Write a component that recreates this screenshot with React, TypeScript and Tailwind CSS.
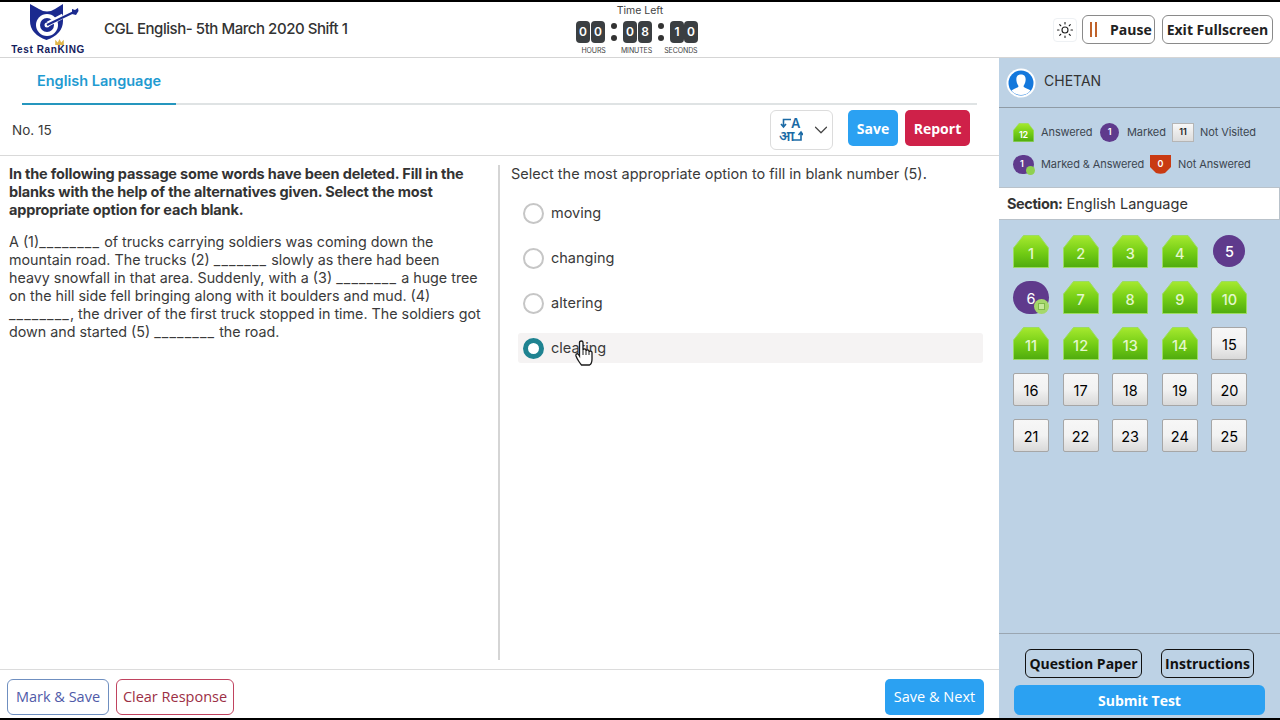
import React from "react";
import { Sun, ChevronDown } from "lucide-react";

const answered = [1, 2, 3, 4, 7, 8, 9, 10, 11, 12, 13, 14];

const Pentagon = ({ id, className }: { id: string; className?: string }) => (
  <svg viewBox="0 0 36 33" preserveAspectRatio="none" className={className}>
    <defs>
      <linearGradient id={id} x1="0" y1="0" x2="0" y2="1">
        <stop offset="0" stopColor="#a6e92f" />
        <stop offset="0.55" stopColor="#72cc14" />
        <stop offset="1" stopColor="#4fab0e" />
      </linearGradient>
    </defs>
    <path d="M10.500 .5 H26 L35.500 13 V32.500 H.5 V13 Z" fill={`url(#${id})`} stroke="#9bdc62" />
  </svg>
);

const Shield = () => (
  <svg viewBox="0 0 21 19" className="h-[19px] w-[21px]">
    <path d="M0 0 H21 V12 L15 18 Q10.5 19.500 6 18 L0 12 Z" fill="#c93a12" />
  </svg>
);

const Logo = () => (
  <div className="flex w-[72px] flex-col items-center">
    <svg viewBox="0 0 72 38" className="h-[38px] w-[72px]">
      <path d="M18 0 L27 5 Q35 10 43 5 L51 0 V17 Q51 30 34.500 36 Q18 30 18 17 Z" fill="#1b2a8f" />
      <circle cx="35" cy="21" r="11" fill="#fff" />
      <circle cx="35" cy="21" r="7" fill="#1b2a8f" />
      <circle cx="35" cy="21" r="2.500" fill="#fff" />
      <path d="M36 20 L51 12" stroke="#fff" strokeWidth="5" />
      <path d="M35 21 L62 8" stroke="#1b2a8f" strokeWidth="2.200" />
      <path d="M60 5 L63 6 L66 4 L66.500 7 L64 11 L60 10 Z" fill="#1b2a8f" />
    </svg>
    <div className="relative mt-[2px] text-[10px] font-bold leading-[12px] tracking-[0.6px] whitespace-nowrap text-[#14205c] font-['Liberation_Sans',sans-serif]">
      Test RanKING
      <svg viewBox="0 0 10 7" className="absolute left-[44px] top-[-5px] h-[6px] w-[9px]">
        <path d="M0 7 L0 1 L3 4 L5 0 L7 4 L10 1 V7 Z" fill="#e0b64a" />
      </svg>
    </div>
  </div>
);

const Digit = ({ v }: { v: string }) => (
  <span className="flex h-[22px] w-[14px] items-center justify-center rounded-[4px] bg-[#3b3f42] text-[12px] font-semibold text-white">
    {v}
  </span>
);

const Colon = () => (
  <span className="mx-[6px] flex w-[6px] flex-col gap-[6px]">
    <span className="h-[6px] w-[6px] rounded-full bg-[#333]" />
    <span className="h-[6px] w-[6px] rounded-full bg-[#333]" />
  </span>
);

const Timer = () => (
  <div className="flex w-[120px] flex-col items-center">
    <span className="ml-[6px] text-[10.500px] leading-[13px] text-[#444]">Time Left</span>
    <div className="mt-[4px] flex items-center">
      <Digit v="0" />
      <span className="w-[1px]" />
      <Digit v="0" />
      <Colon />
      <Digit v="0" />
      <span className="w-[1px]" />
      <Digit v="8" />
      <Colon />
      <Digit v="1" />
      <Digit v="0" />
    </div>
    <div className="mt-[4px] flex w-[121px] justify-between pl-[5px] text-[7px] leading-[8px] tracking-[-0.1px] text-[#444]">
      <span>HOURS</span>
      <span className="ml-[3px]">MINUTES</span>
      <span>SECONDS</span>
    </div>
  </div>
);

const TranslateIcon = () => (
  <div className="relative h-[24px] w-[24px] text-[#1b6aa5]">
    <svg viewBox="0 0 24 24" className="absolute inset-0 h-full w-full" fill="none" stroke="#1b6aa5" strokeWidth="1.600">
      <path d="M12 1.500 H4.500 V8.500 M2 6 L4.500 9 L7 6" />
      <path d="M13 22 H22 V14 M19.500 17 L22 14 L24 17" />
    </svg>
    <span className="absolute left-[12px] top-[-2px] text-[13px] font-semibold leading-[15px]">A</span>
    <span className="absolute left-[0px] top-[9px] text-[14px] font-semibold leading-[17px] font-['Noto_Sans','DejaVu_Sans',sans-serif]">आ</span>
  </div>
);

const Avatar = () => (
  <svg viewBox="0 0 30 30" className="h-[30px] w-[30px]">
    <circle cx="15" cy="15" r="14.500" fill="#fff" />
    <circle cx="15" cy="15" r="12.500" fill="#1478dc" />
    <path d="M15 6.500 C19.500 6.500 20 10 19.500 13 C19.200 15.500 18 17 17.500 18 C17.500 20 22 20.500 24.500 22.500 C20 28.500 10 28.500 5.500 22.500 C8 20.500 12.500 20 12.500 18 C12 17 10.800 15.500 10.500 13 C10 10 10.500 6.500 15 6.500 Z" fill="#fff" />
  </svg>
);

const HandCursor = () => (
  <svg viewBox="0 0 18 26" className="absolute left-[57px] top-[7px] h-[26px] w-[18px]">
    <path
      d="M4.500 2.500 C4.500 .5 8 .5 8 2.500 V10 C8 8.500 11 8.500 11 10 V11 C11 9.500 14 9.500 14 11 V12 C14 10.800 17 10.800 17 12.500 V19 C17 22 15.500 24.500 14.500 25 H6.500 C5.500 24 2 19 1 16 C.5 14 2.500 13 3.500 14.500 L4.500 16 Z"
      fill="#fff"
      stroke="#1a1a1a"
      strokeWidth="1.300"
    />
    <path d="M8 10 V15 M11 11 V15 M14 12 V15" stroke="#1a1a1a" strokeWidth="1" />
  </svg>
);

const Radio = ({ on }: { on?: boolean }) =>
  on ? (
    <span className="h-[21px] w-[21px] rounded-full border-[5px] border-[#1f8391] bg-white" />
  ) : (
    <span className="h-[21px] w-[21px] rounded-full border-2 border-[#c6c6c6] bg-white" />
  );

const Blank = ({ n }: { n: 7 | 8 }) => (
  <span className="tracking-[1.100px]">{n === 7 ? "_______" : "________"}</span>
);

export default function App() {
  const opts = ["moving", "changing", "altering", "clearing"];
  return (
    <div className="flex h-[720px] w-[1280px] flex-col overflow-hidden border-y-2 border-black bg-white font-['Inter',sans-serif] text-[#3a3a3a]">
      {/* header */}
      <header className="flex h-[56px] shrink-0 items-center border-b border-[#d5d5d5] pl-[12px] pr-[7px]">
        <Logo />
        <h1 className="ml-[20px] w-[473px] text-[15px] font-medium tracking-[-0.45px] text-[#333]">
          CGL English- 5th March 2020 Shift 1
        </h1>
        <Timer />
        <div className="ml-auto flex items-center font-['Open_Sans',sans-serif]">
          <span className="flex h-[24px] w-[24px] items-center justify-center rounded-[4px] border border-[#eef1f4] bg-white">
            <Sun size={18} strokeWidth={1.500} className="text-[#222]" />
          </span>
          <button className="ml-[5px] flex h-[29px] w-[73px] items-center rounded-[6px] border border-[#8a8a8a] pl-[7px] text-[14px] font-bold text-[#222]">
            <span className="h-[15px] w-[7px] border-x-2 border-[#c0622a]" />
            <span className="ml-[13px]">Pause</span>
          </button>
          <button className="ml-[7px] h-[29px] w-[111px] rounded-[6px] border border-[#8a8a8a] text-[14px] font-bold text-[#222]">
            Exit Fullscreen
          </button>
        </div>
      </header>

      <div className="flex min-h-0 flex-1">
        {/* question area */}
        <main className="flex w-[999px] shrink-0 flex-col">
          <div className="mx-[22px] h-[47px] shrink-0 border-b-2 border-[#dfe3e4]">
            <div className="-mb-[2px] flex h-[47px] w-[154px] items-center justify-center border-b-2 border-[#2596be] pt-[1px] text-[14.500px] font-semibold text-[#1f9bd1]">
              English Language
            </div>
          </div>
          <div className="flex h-[51px] shrink-0 items-start border-b border-[#d9d9d9] pl-[12px] pr-[29px]">
            <span className="mt-[15px] text-[13.500px] text-[#3a3a3a]">No. 15</span>
            <div className="ml-auto mt-[5px] flex h-[40px] w-[63px] items-center rounded-[6px] border border-[#dcdcdc] pl-[8px]">
              <TranslateIcon />
              <ChevronDown size={22} strokeWidth={1.300} className="ml-[7px] text-[#444]" />
            </div>
            <button className="ml-[15px] mt-[5px] h-[36px] w-[50px] rounded-[5px] bg-[#2ba1f2] text-[14px] font-bold text-white font-['Open_Sans',sans-serif]">
              Save
            </button>
            <button className="ml-[7px] mt-[5px] h-[36px] w-[65px] rounded-[5px] bg-[#cf2149] text-[14px] font-bold text-white font-['Open_Sans',sans-serif]">
              Report
            </button>
          </div>

          <div className="flex min-h-0 flex-1 pt-[9px] pb-[9px]">
            <section className="w-[500px] shrink-0 border-r-2 border-[#d5d5d5] pl-[9px] pr-[5px] text-[14.500px] leading-[18px]">
              <p className="pr-[5px] font-bold tracking-[-0.17px] text-[#333]">
                In the following passage some words have been deleted. Fill in the blanks with the help of the alternatives given. Select the most appropriate option for each blank.
              </p>
              <p className="mt-[14px] text-[14.300px] text-[#3a3a3a]">
                A (1)<Blank n={8} /> of trucks carrying soldiers was coming down the<br />
                mountain road. The trucks (2) <Blank n={7} /> slowly as there had been<br />
                heavy snowfall in that area. Suddenly, with a (3) <Blank n={8} /> a huge tree<br />
                on the hill side fell bringing along with it boulders and mud. (4)<br />
                <Blank n={8} />, the driver of the first truck stopped in time. The soldiers got<br />
                down and started (5) <Blank n={8} /> the road.
              </p>
            </section>
            <section className="flex-1 pl-[11px] pr-[16px]">
              <p className="text-[14.500px] leading-[18px]">
                Select the most appropriate option to fill in blank number (5).
              </p>
              <div className="mt-[15px] flex flex-col gap-[15px] pl-[7px]">
                {opts.map((o, i) => (
                  <div
                    key={o}
                    className={`relative flex h-[30px] items-center gap-[7px] rounded-[3px] pl-[5px] text-[14.500px] ${
                      i === 3 ? "bg-[#f5f3f3]" : ""
                    }`}
                  >
                    <Radio on={i === 3} />
                    <span>{o}</span>
                    {i === 3 && <HandCursor />}
                  </div>
                ))}
              </div>
            </section>
          </div>

          <footer className="flex h-[49px] shrink-0 items-start border-t border-[#dcdcdc] pl-[7px] pr-[15px] pt-[9px] text-[14.500px] font-['Open_Sans',sans-serif]">
            <button className="h-[36px] w-[102px] rounded-[6px] border border-[#6f8fc0] text-[#4f5aa8]">Mark &amp; Save</button>
            <button className="ml-[7px] h-[36px] w-[118px] rounded-[6px] border border-[#c0435f] text-[#9c2f45]">Clear Response</button>
            <button className="ml-auto h-[36px] w-[99px] rounded-[5px] bg-[#2ba1f2] text-white">Save &amp; Next</button>
          </footer>
        </main>

        {/* palette */}
        <aside className="flex w-[281px] shrink-0 flex-col bg-[#bdd2e5]">
          <div className="flex h-[50px] shrink-0 items-center border-b border-[#8f9ba5] pl-[7px]">
            <Avatar />
            <span className="ml-[8px] -mt-[4px] text-[14px] text-[#333]">CHETAN</span>
          </div>
          <div className="flex h-[79px] shrink-0 flex-col gap-[12px] pl-[14px] pt-[14px] text-[11px] tracking-[-0.1px] text-[#3c4650]">
            <div className="flex h-[20px] items-center">
              <span className="relative flex h-[19px] w-[21px] items-end justify-center text-[9px] font-semibold text-white">
                <Pentagon id="lg1" className="absolute inset-0 h-full w-full" />
                <span className="relative">12</span>
              </span>
              <span className="ml-[7px] w-[51px]">Answered</span>
              <span className="ml-[8px] flex h-[19px] w-[19px] items-center justify-center rounded-full bg-[#5f3a8c] text-[9px] font-semibold text-white">1</span>
              <span className="ml-[8px] w-[39px]">Marked</span>
              <span className="ml-[6px] flex h-[19px] w-[22px] items-center justify-center border border-[#b5b5b5] bg-gradient-to-b from-[#f8f8f8] to-[#dcdcdc] text-[9px] font-semibold text-[#222]">11</span>
              <span className="ml-[6px]">Not Visited</span>
            </div>
            <div className="flex h-[20px] items-center">
              <span className="relative flex h-[19px] w-[21px] items-center rounded-full bg-[#5f3a8c] pl-[7px] text-[9px] font-semibold text-white">
                1
                <span className="absolute right-[-1px] bottom-[-1px] h-[9px] w-[9px] rounded-full bg-[#8fd050]" />
              </span>
              <span className="ml-[7px] w-[102px] whitespace-nowrap">Marked &amp; Answered</span>
              <span className="relative ml-[7px] flex h-[19px] w-[21px] items-center justify-center text-[9px] font-semibold text-white">
                <span className="absolute inset-0"><Shield /></span>
                <span className="relative">0</span>
              </span>
              <span className="ml-[7px]">Not Answered</span>
            </div>
          </div>
          <div className="flex h-[33px] shrink-0 items-center border-y border-r border-[#b9c2ca] bg-white pl-[8px] text-[14.500px] text-[#333]">
            <b className="font-bold tracking-[-0.4px]">Section:</b>
            <span className="ml-[4px]">English Language</span>
          </div>
          <div className="grid grid-cols-[repeat(5,36px)] gap-x-[13.600px] gap-y-[13px] pl-[14px] pt-[15px]">
            {Array.from({ length: 25 }, (_, k) => k + 1).map((n) => {
              if (answered.includes(n))
                return (
                  <div key={n} className="relative flex h-[33px] items-center justify-center pt-[4px] text-[14.500px] font-medium text-[#e4f7cc]">
                    <Pentagon id={`p${n}`} className="absolute inset-0 h-full w-full" />
                    <span className="relative">{n}</span>
                  </div>
                );
              if (n === 5)
                return (
                  <div key={n} className="ml-[2px] flex h-[32px] w-[32px] items-center justify-center rounded-full bg-[#5f3a8c] pt-[2px] text-[14.500px] font-medium text-white">
                    {n}
                  </div>
                );
              if (n === 6)
                return (
                  <div key={n} className="relative flex h-[33px] items-center justify-center rounded-full bg-[#5f3a8c] pt-[2px] text-[14.500px] text-white">
                    {n}
                    <span className="absolute bottom-[0px] right-[0px] flex h-[15px] w-[15px] items-center justify-center rounded-full bg-[#a5d86b]">
                      <span className="h-[7px] w-[7px] border border-[#7fb84a] bg-[#c5e89a]" />
                    </span>
                  </div>
                );
              return (
                <div key={n} className="flex h-[33px] items-center justify-center rounded-[2px] border border-[#a6a6a6] bg-gradient-to-b from-[#f7f7f7] via-[#f2f2f2] to-[#d9d9d9] pt-[2px] text-[14.500px] font-normal text-[#000]">
                  {n}
                </div>
              );
            })}
          </div>
          <div className="mt-auto flex h-[85px] shrink-0 flex-col border-t border-[#9aa6b1] pl-[15px] pt-[15px] font-['Open_Sans',sans-serif]">
            <div className="flex pl-[11px]">
              <button className="h-[29px] w-[117px] rounded-[6px] border border-[#111] text-[14px] font-bold text-[#111]">Question Paper</button>
              <button className="ml-[19px] h-[29px] w-[93px] rounded-[6px] border border-[#111] text-[14px] font-bold text-[#111]">Instructions</button>
            </div>
            <button className="mt-[7px] h-[30px] w-[251px] rounded-[6px] bg-[#2ba1f2] text-[14px] font-bold text-white">Submit Test</button>
          </div>
        </aside>
      </div>
    </div>
  );
}
